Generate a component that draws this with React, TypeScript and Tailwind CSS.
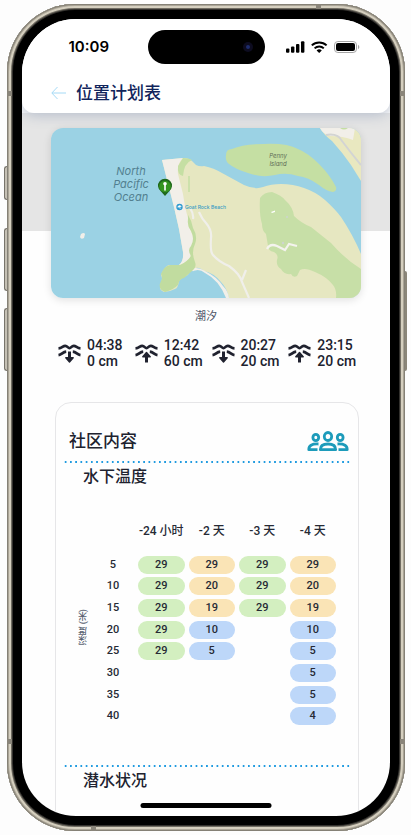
import React from "react";

type Tide = { time: string; height: string; rising: boolean };

const tides: Tide[] = [
  { time: "04:38", height: "0 cm", rising: false },
  { time: "12:42", height: "60 cm", rising: true },
  { time: "20:27", height: "20 cm", rising: false },
  { time: "23:15", height: "20 cm", rising: true },
];

type Tone = "green" | "amber" | "blue";
type Reading = { value: number; tone: Tone } | null;

const tones: Record<Tone, string> = {
  green: "bg-[#d3efc0]",
  amber: "bg-[#fae4b6]",
  blue: "bg-[#bdd7f9]",
};

const g = (value: number): Reading => ({ value, tone: "green" });
const a = (value: number): Reading => ({ value, tone: "amber" });
const b = (value: number): Reading => ({ value, tone: "blue" });

const periods = ["-24 小时", "-2 天", "-3 天", "-4 天"];

const rows: { depth: number; cells: Reading[] }[] = [
  { depth: 5, cells: [g(29), a(29), g(29), a(29)] },
  { depth: 10, cells: [g(29), a(20), g(29), a(20)] },
  { depth: 15, cells: [g(29), a(19), g(29), a(19)] },
  { depth: 20, cells: [g(29), b(10), null, b(10)] },
  { depth: 25, cells: [g(29), b(5), null, b(5)] },
  { depth: 30, cells: [null, null, null, b(5)] },
  { depth: 35, cells: [null, null, null, b(5)] },
  { depth: 40, cells: [null, null, null, b(4)] },
];

function StatusIcons() {
  return (
    <svg width="75" height="14" viewBox="0 0 75 14" aria-hidden="true">
      <g fill="#000">
        <rect x="0" y="8.6" width="3.4" height="4.2" rx="1" />
        <rect x="5" y="6.6" width="3.4" height="6.2" rx="1" />
        <rect x="10" y="4" width="3.4" height="8.8" rx="1" />
        <rect x="15" y="1.2" width="3.4" height="11.6" rx="1" />
      </g>
      <g fill="none" stroke="#000" strokeWidth="2">
        <path d="M25.8 5.4a10.6 10.6 0 0 1 14.8 0" />
        <path d="M28.6 8.4a6.6 6.6 0 0 1 9.2 0" />
      </g>
      <path d="M30.6 10.4a3.8 3.8 0 0 1 5.2 0l-2.6 2.6z" fill="#000" />
      <rect x="48.5" y="1.5" width="22" height="11" rx="3.4" fill="none" stroke="#a5a5a5" />
      <rect x="50" y="3" width="19" height="8" rx="2" fill="#000" />
      <path d="M72 4.8c1.8.7 1.8 3.7 0 4.4z" fill="#a5a5a5" />
    </svg>
  );
}

function TideIcon({ rising }: { rising: boolean }) {
  return (
    <svg className="shrink-0" width="23" height="19" viewBox="0 0 23 19" fill="none" stroke="#20222f" aria-hidden="true">
      <path d="M.5 4.400C4 4.200 4.800 1.900 7.200 1.900S9.800 4.100 11.500 4.100 13.400 1.900 15.800 1.900 19 4.200 22.500 4.400" strokeWidth="2.700" />
      <path d="M.5 11.200C4 10.700 4.600 8 8.200 7.700" strokeWidth="2.700" />
      <path d="M22.500 11.200C19 10.700 18.400 8 14.800 7.700" strokeWidth="2.700" />
      {rising ? (
        <g>
          <path d="M11.500 18.500v-7" strokeWidth="3" />
          <path d="M11.500 8.500l3.700 4.200H7.800z" fill="#20222f" strokeWidth="1.400" strokeLinejoin="round" />
        </g>
      ) : (
        <g>
          <path d="M11.500 7.500v7" strokeWidth="3" />
          <path d="M11.500 18l3.700-4.200H7.800z" fill="#20222f" strokeWidth="1.400" strokeLinejoin="round" />
        </g>
      )}
    </svg>
  );
}

function PeopleIcon() {
  return (
    <svg width="42" height="21" viewBox="0 0 42 21" fill="none" stroke="#1d9bba" strokeWidth="2.800" aria-hidden="true">
      <ellipse cx="21" cy="5.500" rx="3.700" ry="4" />
      <ellipse cx="8.800" cy="6.500" rx="2.900" ry="3.200" />
      <ellipse cx="33.200" cy="6.500" rx="2.900" ry="3.200" />
      <path d="M13.300 18.700c0-4 3-5.700 7.700-5.700s7.700 1.700 7.700 5.700z" strokeLinejoin="round" />
      <path d="M10.500 18.700H1.800c0-4 2.700-6 9.700-5.700" strokeLinejoin="round" />
      <path d="M31.500 18.700h8.700c0-4-2.700-6-9.700-5.700" strokeLinejoin="round" />
    </svg>
  );
}

function LocationMap() {
  return (
    <svg className="block h-auto w-full" viewBox="0 0 310 170" role="img" aria-label="Goat Rock Beach">
      <rect width="310" height="170" fill="#9bd2e4" />
      <path
        d="M111 32L132 30Q138 30 141 33L145 37Q149 39 153 38Q163 40 171 45L193 57Q204 62 212 59Q220 56 230 56Q242 56 253 60Q265 64 274 72Q284 81 290 89Q302 107 310 126V170H178Q176 160 170 154Q163 145 153 143Q148 139 145 140Q139 143 137 147Q130 150 128 153Q127 160 124 161Q118 164 113 164Q107 162 110 155Q112 151 110 147Q114 138 118 137L128 137Q133 133 132 124L128 101L123 79Z"
        fill="#e6e7c1"
      />
      <path
        d="M111 32L132 30Q126 35 127 46L132 66Q134 80 137 90Q136 96 140 103Q144 111 141 119L139 130Q134 136 128 137Q133 133 132 124L128 101L123 79Z"
        fill="#f2efe9"
      />
      <path d="M132 30Q138 30 141 32Q133 35 132 48Q126 47 127 38Z" fill="#c5dfa3" />
      <path d="M138 48V64" stroke="#c5dfa3" strokeWidth="1.500" />
      <path d="M139 141Q147 138 154 143Q166 149 172 158Q177 163 178 170H170L150 150Z" fill="#f2efe9" />
      <path d="M130 152Q136 149 139 145Q147 139 154 145Q168 152 175 170H124Z" fill="#9bd2e4" />
      <path
        d="M137 87Q141 93 142 100Q147 108 144 116Q140 124 144 134Q146 139 141 143L133 150Q128 151 127 157Q122 162 114 164Q106 161 110 153Q112 150 110 146Q113 138 119 137L129 137Q136 134 140 128Q136 122 140 118Q144 111 140 103Q136 98 137 92Z"
        fill="#c1dc9f"
      />
      <path d="M139 80Q143 86 142 91M148 84Q151 91 155 95Q161 102 160 110Q159 124 162 127Q168 134 178 138Q189 146 191 154L198 170M191 152L195 142" fill="none" stroke="#f0efea" strokeWidth="2.200" />
      <path
        d="M209 70Q213 64 221 64Q230 67 234 72Q242 79 243 88Q250 95 260 99L280 115Q295 132 310 141V170H285Q286 162 282 157Q276 149 264 144Q254 139 249 142L246 148Q242 150 240 146Q233 147 230 141Q225 138 226 132Q228 127 223 124Q217 123 217 118L215 106Q211 103 211 96Q208 86 209 70Z"
        fill="#c7dfa7"
      />
      <path d="M216 121Q219 115 226 118L234 122L238 116L246 118" fill="none" stroke="#f4f3ee" strokeWidth="2.200" />
      <path d="M220 84l4-1.500v1.500l-3 1z" fill="#fff" />
      <circle cx="236" cy="89" r="1" fill="#cdd4cf" />
      <circle cx="232" cy="115" r="1.200" fill="#cdd4cf" />
      <path
        d="M175 27Q175 21 181 21Q193 16 213 16Q236 15 247 21Q257 25 268 36Q279 47 285 59Q286 63 282 64Q275 63 268 57Q257 49 247 48Q235 44 224 47Q210 50 197 45Q184 41 178 36Q174 33 175 27Z"
        fill="#c5dfa3"
      />
      <path d="M269 0Q273 7 281 13Q291 24 300 37L310 53V0Z" fill="#e9e8c0" />
      <path d="M269 0Q272 6 279 8Q292 8 302 12L304 0Z" fill="#f2efe9" />
      <path d="M275 7Q287 5 291 13Q300 25 310 37" fill="none" stroke="#d3d4d3" strokeWidth="2" />
      <path d="M289 0h8q-4 3-8 0z" fill="#c5dfa3" />
      <path d="M30 106q3-2 4 0l-1 4q-3 2-4-1z" fill="#f2efe9" />
      <g className="font-['Inter',sans-serif] italic" textAnchor="middle">
        <g fill="#527f8f" fontSize="11">
          <text x="80" y="47">North</text>
          <text x="80" y="60">Pacific</text>
          <text x="80" y="73">Ocean</text>
        </g>
        <g fill="#5d6e56" fontSize="6">
          <text x="227" y="30">Penny</text>
          <text x="227" y="38">Island</text>
        </g>
      </g>
      <circle cx="128.500" cy="79" r="3.200" fill="#2f9bd0" />
      <path d="M126.800 79.200a1.800 1.800 0 0 1 3.400-.6zM128.500 78.500l.8 2.500" fill="#fff" stroke="#fff" strokeWidth=".6" />
      <text className="font-['Inter',sans-serif]" x="134" y="81" fontSize="5" fontWeight="500" fill="#379bc4">
        Goat Rock Beach
      </text>
      <path d="M114 68l-4-4.500A7 7 0 1 1 118 63.500z" fill="#20691d" />
      <circle cx="114" cy="58.500" r="5.800" fill="#35951f" />
      <path d="M114 56v6" stroke="#fff" strokeWidth="1.600" strokeLinecap="round" />
      <circle cx="114" cy="55.800" r="1.800" fill="#fff" />
    </svg>
  );
}

function DottedRule() {
  return (
    <hr className="mx-[7px] h-0.5 border-0 bg-[radial-gradient(circle,#209be0_1px,transparent_1px)] bg-[length:1.82%_2px] bg-repeat-x" />
  );
}

function DepthTable() {
  return (
    <div className="flex pt-[23px] pr-5 pl-5">
      <div className="flex w-3.5 items-center justify-center pt-3.5">
        <span className="rotate-180 text-[9px] leading-3 text-[#5b6472] [writing-mode:vertical-rl]">深度 (米)</span>
      </div>
      <table className="block flex-1 font-medium text-[#262a35]">
        <thead className="block">
          <tr className="grid grid-cols-[46px_repeat(4,1fr)] text-xs leading-[38px]">
            <td />
            {periods.map((p) => (
              <th key={p} scope="col" className="text-center font-medium whitespace-nowrap">
                {p}
              </th>
            ))}
          </tr>
        </thead>
        <tbody className="mt-1 grid h-[173px] grid-rows-8 text-[11px] leading-[18px]">
          {rows.map((row) => (
            <tr key={row.depth} className="grid grid-cols-[46px_repeat(4,1fr)] items-center text-center">
              <th scope="row" className="font-medium">
                {row.depth}
              </th>
              {row.cells.map((cell, i) => (
                <td key={i} className="px-0.5">
                  {cell && <span className={`block rounded-full ${tones[cell.tone]}`}>{cell.value}</span>}
                </td>
              ))}
            </tr>
          ))}
        </tbody>
      </table>
    </div>
  );
}

export default function App() {
  return (
    <div className="h-screen bg-[#fdfdfd] pt-1 pr-1.5 pb-1 pl-[7px] font-['Roboto','Noto_Sans_CJK_SC',sans-serif]" lang="zh-CN">
      <div className="relative h-full rounded-[68px] bg-black p-[15px] shadow-[inset_0_0_0_1px_#858176,inset_0_0_0_2px_#aaa496,inset_0_0_0_4px_#d5cfbf,inset_0_0_0_5px_#706c62,inset_0_0_0_6px_#33312e]">
        <span className="absolute top-[162px] -left-[3px] h-[34px] w-[3px] rounded-l-sm border border-r-0 border-[#77736a] bg-[#c5c0b4]" />
        <span className="absolute top-[224px] -left-[3px] h-[63px] w-[3px] rounded-l-sm border border-r-0 border-[#77736a] bg-[#c5c0b4]" />
        <span className="absolute top-[304px] -left-[3px] h-[63px] w-[3px] rounded-l-sm border border-r-0 border-[#77736a] bg-[#c5c0b4]" />
        <span className="absolute top-[267px] -right-0.5 h-[100px] w-0.5 rounded-r-sm bg-[#8b8679]" />
        <span className="absolute top-[87px] left-0 h-[5px] w-[5px] bg-[#8a857a]" />
        <span className="absolute top-[87px] right-0 h-[5px] w-[5px] bg-[#8a857a]" />
        <span className="absolute bottom-[87px] left-0 h-[5px] w-[5px] bg-[#8a857a]" />
        <span className="absolute right-0 bottom-[87px] h-[5px] w-[5px] bg-[#8a857a]" />
        <span className="absolute top-0 right-[84px] h-[5px] w-[5px] bg-[#8a857a]" />
        <span className="absolute bottom-0 left-[84px] h-[5px] w-[5px] bg-[#8a857a]" />

        <div className="relative flex h-full flex-col overflow-hidden rounded-[54px] bg-[#fefefe]">
          <header className="relative z-10 rounded-b-xl bg-white pt-[11px] shadow-[0_2px_14px_#b4bccb]">
            <div className="grid grid-cols-[1fr_117px_1fr] items-center">
              <time className="pl-2 text-center font-['Inter',sans-serif] text-[15px] font-semibold text-black">10:09</time>
              <div className="flex h-[34px] items-center justify-end rounded-full bg-black pr-3">
                <span className="flex size-2.5 items-center justify-center rounded-full bg-[#0d0c20]">
                  <span className="size-1 rounded-full bg-[#1d2c6c]" />
                </span>
              </div>
              <div className="flex justify-center pr-2">
                <StatusIcons />
              </div>
            </div>
            <div className="mt-1 flex h-[45px] items-center gap-2.5 pt-1 pl-[29px]">
              <button type="button" aria-label="返回" className="flex">
                <svg width="15" height="14" viewBox="0 0 15 14" fill="none" stroke="#a5daf6" aria-hidden="true">
                  <path d="M15 7H1M6.500 1L.8 7l5.700 6" />
                </svg>
              </button>
              <h1 className="text-[17px] leading-6 font-medium text-[#10245b]">位置计划表</h1>
            </div>
          </header>

          <main className="min-h-0 flex-1 overflow-hidden">
            <section className="bg-[linear-gradient(to_bottom,#e5e5e5_118px,transparent_118px)] px-[29px] pt-[15px]">
              <div className="overflow-hidden rounded-xl shadow-[0_2px_8px_#0000001f]">
                <LocationMap />
              </div>
            </section>

            <section>
              <h2 className="mt-[11px] text-center text-[11px] leading-4 text-[#4c5566]">潮汐</h2>
              <ul className="mt-3 grid grid-cols-4 pr-[25px] pl-9">
                {tides.map((t) => (
                  <li key={t.time} className="flex items-center gap-1.5 text-sm leading-4 font-medium whitespace-nowrap text-[#20222f]">
                    <TideIcon rising={t.rising} />
                    <span>
                      {t.time}
                      <br />
                      {t.height}
                    </span>
                  </li>
                ))}
              </ul>
            </section>

            <section className="mt-[33px] mr-[31px] ml-[33px] h-[480px] rounded-2xl border border-[#e6e6e8] font-medium text-[#20222f]">
              <div className="flex items-center justify-between pt-[26px] pr-[9px] pb-2 pl-[13px]">
                <h2 className="text-[17px] leading-6">社区内容</h2>
                <PeopleIcon />
              </div>
              <DottedRule />
              <h3 className="mt-0.5 pl-[27px] text-base leading-6">水下温度</h3>
              <DepthTable />
              <div className="mt-[38px]">
                <DottedRule />
              </div>
              <h3 className="mt-0.5 pl-[27px] text-base leading-6">潜水状况</h3>
            </section>
          </main>

          <div className="absolute bottom-2 left-1/2 h-[5px] w-[131px] -translate-x-1/2 rounded-full bg-black" />
        </div>
      </div>
    </div>
  );
}
